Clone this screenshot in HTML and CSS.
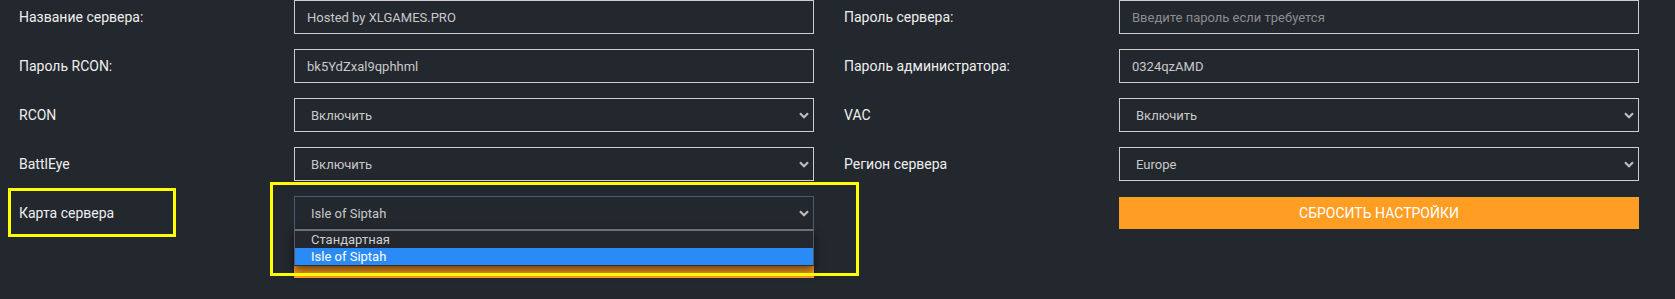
FILE: index.html
```html
<!DOCTYPE html>
<html lang="ru">
<head>
  <meta charset="UTF-8">
  <title>Настройки сервера</title>
  <link rel="stylesheet" href="styles.css">
</head>
<body>
  <form class="settings">
    <div class="col">
      <label class="label" for="srvName">Название сервера:</label>
      <input class="field" id="srvName" type="text" value="Hosted by XLGAMES.PRO">

      <label class="label" for="rconPass">Пароль RCON:</label>
      <input class="field" id="rconPass" type="text" value="bk5YdZxal9qphhml">

      <label class="label" for="rcon">RCON</label>
      <div class="select-wrap">
        <select class="field select" id="rcon">
          <option>Включить</option>
          <option>Выключить</option>
        </select>
        <svg class="chevron" width="10" height="7" viewBox="0 0 10 7"><path d="M1 1.2 5 5.2 9 1.2" /></svg>
      </div>

      <label class="label" for="battleye">BattlEye</label>
      <div class="select-wrap">
        <select class="field select" id="battleye">
          <option>Включить</option>
          <option>Выключить</option>
        </select>
        <svg class="chevron" width="10" height="7" viewBox="0 0 10 7"><path d="M1 1.2 5 5.2 9 1.2" /></svg>
      </div>

      <label class="label" for="map">Карта сервера</label>
      <div class="select-wrap open">
        <select class="field select" id="map">
          <option>Стандартная</option>
          <option selected>Isle of Siptah</option>
        </select>
        <svg class="chevron" width="10" height="7" viewBox="0 0 10 7"><path d="M1 1.2 5 5.2 9 1.2" /></svg>
        <ul class="options">
          <li>Стандартная</li>
          <li class="active">Isle of Siptah</li>
        </ul>
      </div>

      <span></span>
      <button class="btn" type="button" aria-label="Сохранить настройки"></button>
    </div>

    <div class="col">
      <label class="label" for="srvPass">Пароль сервера:</label>
      <input class="field" id="srvPass" type="text" placeholder="Введите пароль если требуется">

      <label class="label" for="adminPass">Пароль администратора:</label>
      <input class="field" id="adminPass" type="text" value="0324qzAMD">

      <label class="label" for="vac">VAC</label>
      <div class="select-wrap">
        <select class="field select" id="vac">
          <option>Включить</option>
          <option>Выключить</option>
        </select>
        <svg class="chevron" width="10" height="7" viewBox="0 0 10 7"><path d="M1 1.2 5 5.2 9 1.2" /></svg>
      </div>

      <label class="label" for="region">Регион сервера</label>
      <div class="select-wrap">
        <select class="field select" id="region">
          <option>Europe</option>
          <option>North America</option>
          <option>Asia</option>
        </select>
        <svg class="chevron" width="10" height="7" viewBox="0 0 10 7"><path d="M1 1.2 5 5.2 9 1.2" /></svg>
      </div>

      <span></span>
      <button class="btn" type="button">Сбросить настройки</button>
    </div>
  </form>

  <!-- highlight marks -->
  <div class="mark mark-label"></div>
  <div class="mark mark-field"></div>
</body>
</html>
```

FILE: styles.css
```css
body {
  margin: 0;
  padding: 0 0 0 19px;
  min-height: 299px;
  background-color: #23272e;
  font-family: 'Roboto', 'Liberation Sans', sans-serif;
  color: #eeeeee;
  position: relative;
}
.settings {
  display: flex;
  gap: 30px;
}
.col {
  display: grid;
  grid-template-columns: 275px 520px;
  grid-auto-rows: 34px;
  row-gap: 15px;
}
.label {
  align-self: center;
  font-size: 14px;
  color: #efefef;
}
.field {
  box-sizing: border-box;
  width: 100%;
  height: 34px;
  margin: 0;
  padding: 0 12px;
  border: 1px solid #cdcdcd;
  border-radius: 0;
  background-color: #23272e;
  color: #c9c9c9;
  font-family: 'Roboto', 'Liberation Sans', sans-serif;
  font-size: 13px;
  outline: none;
}
.field::placeholder {
  color: #8b8d90;
}
.select-wrap {
  position: relative;
}
.select {
  -webkit-appearance: none;
  appearance: none;
  padding-left: 16px;
}
.chevron {
  position: absolute;
  right: 5px;
  top: 14px;
  pointer-events: none;
}
.chevron path {
  fill: none;
  stroke: #bdbdbd;
  stroke-width: 2.2;
}
.open .select {
  border-color: #4c5b6f;
}
.options {
  position: absolute;
  z-index: 2;
  top: 33px;
  left: 0;
  right: 0;
  margin: 0;
  padding: 0;
  list-style: none;
  background-color: #24272d;
  border: 1px solid #55585d;
  border-top: 2px solid #6c6f74;
  border-bottom-color: #2c2e33;
  box-shadow: 0 5px 8px rgba(0, 0, 0, 0.55);
  font-size: 13px;
}
.options li {
  height: 17px;
  line-height: 17px;
  padding-left: 16px;
  color: #cfcfcf;
}
.options li.active {
  background-color: #2a8bf6;
  color: #ffffff;
}
.btn {
  align-self: center;
  height: 32px;
  border: none;
  border-radius: 0;
  background-color: #ff9e22;
  color: #ffffff;
  font-family: 'Roboto', 'Liberation Sans', sans-serif;
  font-size: 14px;
  text-transform: uppercase;
  cursor: pointer;
}
.mark {
  position: absolute;
  z-index: 3;
  box-sizing: border-box;
  border: 3px solid #ffff00;
  pointer-events: none;
}
.mark-label {
  left: 8px;
  top: 188px;
  width: 168px;
  height: 49px;
}
.mark-field {
  left: 270px;
  top: 182px;
  width: 589px;
  height: 94px;
}
```
